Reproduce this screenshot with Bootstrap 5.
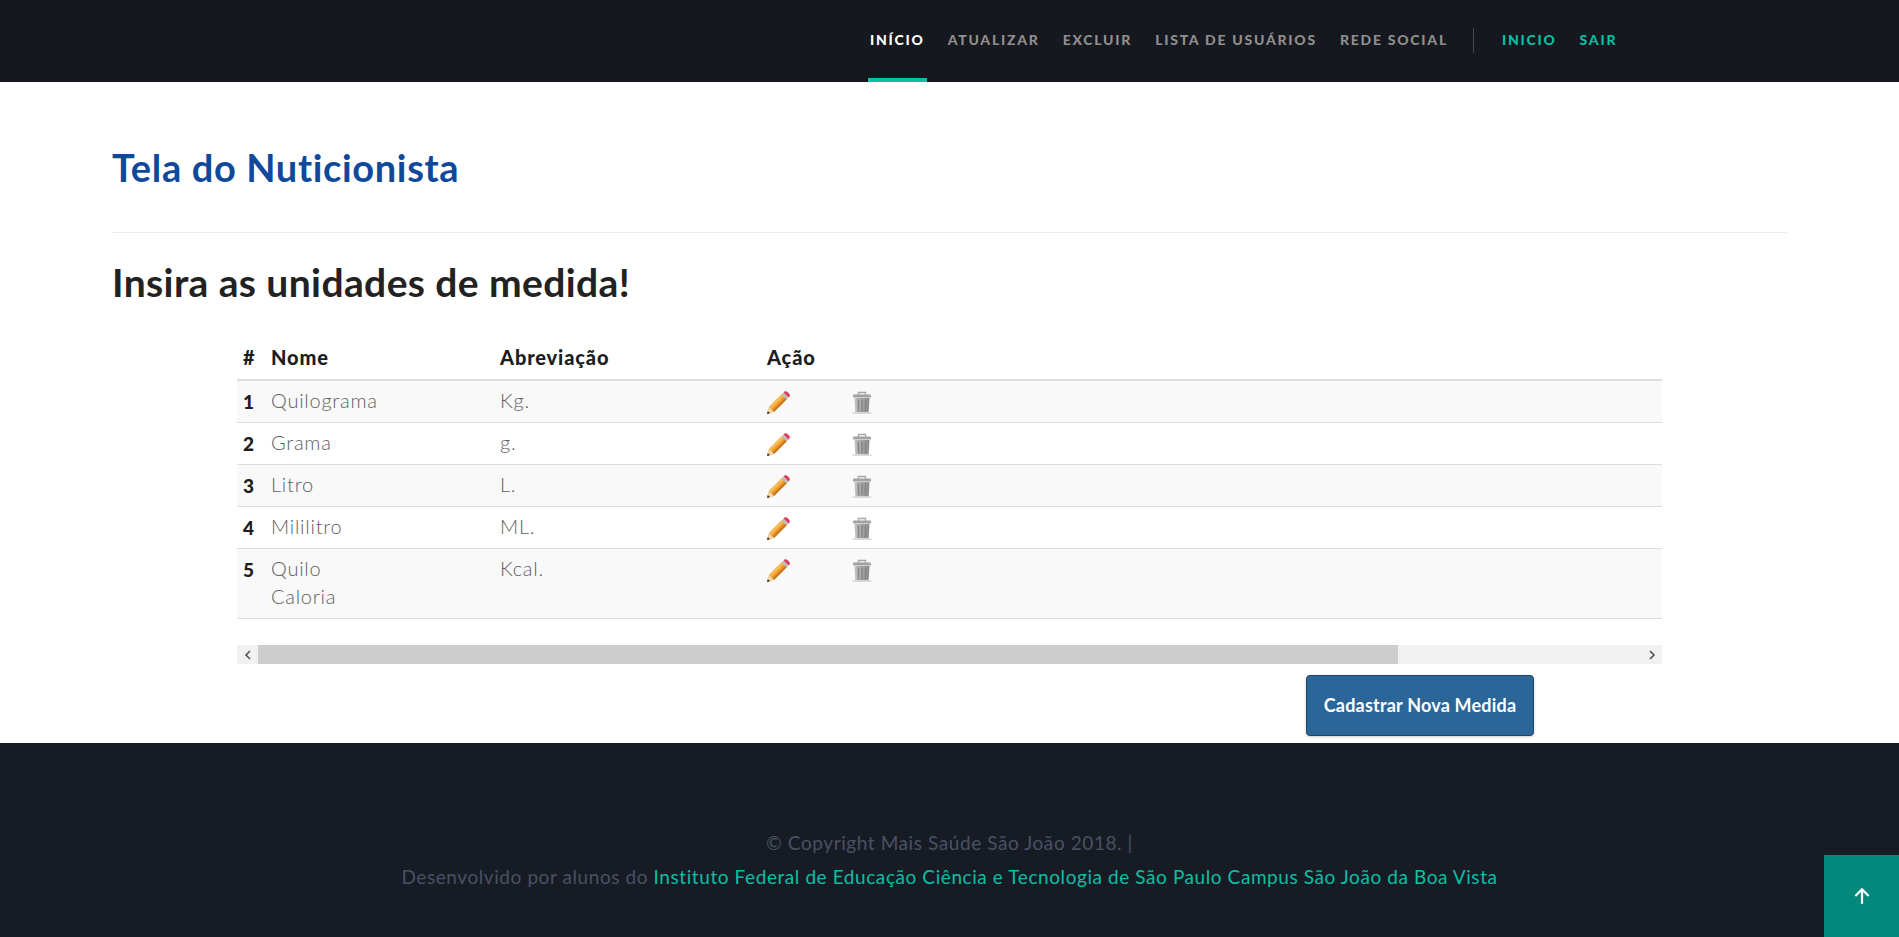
<!DOCTYPE html>
<html lang="pt-BR">
<head>
    <meta charset="UTF-8">
    <meta name="viewport" content="width=device-width, initial-scale=1.0">
    <title>Tela do Nuticionista</title>
    <link href="https://cdn.jsdelivr.net/npm/bootstrap@5.3.2/dist/css/bootstrap.min.css" rel="stylesheet">
    <style>
        body { font-family: "Lato", "Liberation Sans", sans-serif; background: #fff; min-height: 937px; position: relative; }
        .top-bar { background: #15181e; height: 82px; padding: 0 0 0 868px; align-items: stretch; flex-wrap: nowrap; justify-content: flex-start; }
        .top-links { flex-direction: row; align-items: stretch; }
        .top-links .nav-link { color: #8f8f8f; font-size: 14px; font-weight: 900; letter-spacing: 1.75px; text-transform: uppercase; padding: 0 2px; margin-right: 19px; height: 82px; line-height: 80px; border-bottom: 4px solid transparent; }
        .top-links .nav-link.active { color: #fff; border-bottom-color: #0bbfa5; }
        .top-links .nav-link.accent { color: #0bbfa5; }
        .top-sep { width: 1px; height: 25px; background: #44474c; margin: 28px 26px 0 4px; }
        .page-body { padding: 65px 112px 7px; }
        .page-title { color: #10499b; font-size: 38px; font-weight: 700; line-height: 40px; letter-spacing: .65px; margin: 0 0 45px; }
        .page-rule { margin: 0 0 29px; border: 0; border-top: 1px solid #eee; opacity: 1; }
        .page-sub { color: #222; font-size: 39px; font-weight: 700; line-height: 40px; letter-spacing: .4px; margin: 0 0 38px; }
        .units-wrap { margin: 0 125px; }
        .units { --bs-table-striped-bg: #f9f9f9; --bs-table-striped-color: #5e5e5e; --bs-table-border-color: #ddd; --bs-table-color: #5e5e5e; table-layout: fixed; margin-bottom: 26px; }
        .units th { color: #1d1d1d; font-size: 20px; font-weight: 900; line-height: 28px; letter-spacing: .85px; padding: 3px 6px 8px; border-bottom: 2px solid #ddd; }
        .units td { font-size: 20px; font-weight: 300; line-height: 28px; letter-spacing: .75px; padding: 5px 6px 8px; }
        .units tbody tr td.num { color: #1d1d1d; font-size: 19px; font-weight: 900; letter-spacing: 0; padding-top: 7px; padding-bottom: 6px; }
        .units svg { display: block; margin: 5px 0 -2px -1px; }
        .fake-scroll { height: 19px; background: #f1f1f1; align-items: stretch; }
        .fake-scroll .arrow { width: 21px; flex: none; display: flex; align-items: center; justify-content: center; }
        .fake-scroll .thumb { width: 1140px; background: #cdcdcd; flex: none; }
        .new-btn { margin: 11px 253px 0 0; width: 228px; height: 61px; background: #2c6699; border: 1px solid #1d446b; color: #fff; font-size: 18px; font-weight: 700; letter-spacing: .2px; border-radius: 4px; box-shadow: 0 1px 3px rgba(0,0,0,.2); padding: 0; }
        .new-btn:hover { background: #2c6699; color: #fff; border-color: #1d446b; }
        .page-foot { background: #171c24; height: 195px; padding-top: 83px; color: #4a5064; font-size: 19px; line-height: 34px; text-align: center; letter-spacing: .58px; }
        .page-foot p { margin: 0; }
        .page-foot a { color: #0bbfa5; text-decoration: none; }
        .to-top { position: absolute; right: 0; top: 855px; width: 75px; height: 82px; background: #03897b; display: flex; align-items: center; justify-content: center; }
    </style>
</head>
<body>
    <nav class="navbar top-bar">
        <ul class="navbar-nav top-links">
            <li class="nav-item"><a class="nav-link active" href="#">Início</a></li>
            <li class="nav-item"><a class="nav-link" href="#">Atualizar</a></li>
            <li class="nav-item"><a class="nav-link" href="#">Excluir</a></li>
            <li class="nav-item"><a class="nav-link" href="#">Lista de Usuários</a></li>
            <li class="nav-item"><a class="nav-link" href="#">Rede Social</a></li>
            <li class="top-sep"></li>
            <li class="nav-item"><a class="nav-link accent" href="#">Inicio</a></li>
            <li class="nav-item"><a class="nav-link accent" href="#">Sair</a></li>
        </ul>
    </nav>

    <main class="page-body">
        <h1 class="page-title">Tela do Nuticionista</h1>
        <hr class="page-rule">
        <h2 class="page-sub">Insira as unidades de medida!</h2>

        <div class="units-wrap">
            <table class="table table-striped units">
                <colgroup>
                    <col style="width: 28px">
                    <col style="width: 229px">
                    <col style="width: 267px">
                    <col style="width: 84px">
                    <col>
                </colgroup>
                <thead>
                    <tr><th>#</th><th>Nome</th><th>Abreviação</th><th>Ação</th><th></th></tr>
                </thead>
                <tbody id="rows"></tbody>
            </table>
            <div class="fake-scroll d-flex">
                <span class="arrow"><svg width="8" height="10" viewBox="0 0 8 10"><path d="M6 1 2 5l4 4" fill="none" stroke="#505050" stroke-width="1.6"/></svg></span>
                <span class="thumb"></span>
                <span class="flex-grow-1"></span>
                <span class="arrow"><svg width="8" height="10" viewBox="0 0 8 10"><path d="M2 1l4 4-4 4" fill="none" stroke="#505050" stroke-width="1.6"/></svg></span>
            </div>
        </div>
        <div class="d-flex justify-content-end">
            <a href="#" class="btn new-btn d-flex align-items-center justify-content-center">Cadastrar Nova Medida</a>
        </div>
    </main>

    <footer class="page-foot">
        <p>© Copyright Mais Saúde São João 2018. |</p>
        <p>Desenvolvido por alunos do <a href="#">Instituto Federal de Educação Ciência e Tecnologia de São Paulo Campus São João da Boa Vista</a></p>
    </footer>
    <a href="#" class="to-top" aria-label="Topo">
        <svg width="20" height="20" viewBox="0 0 18 18"><path d="M9 16V3M3 9l6-6 6 6" fill="none" stroke="#fff" stroke-width="2"/></svg>
    </a>

    <script>
        const pencil = `<svg width="24" height="24" viewBox="0 0 24 24">
            <path d="M1 23l2-7L16 3l5 5L8 21z" fill="#ee9b2d"/>
            <path d="M3 16L16 3l2 2L5 18z" fill="#f7bb55"/>
            <path d="M8 21L21 8l-1.500-1.500L6.500 19.500z" fill="#c9761a"/>
            <path d="M1 23l2-7 5 5z" fill="#f1d5a8"/>
            <path d="M1 23l.8-3 2.200 2.200z" fill="#3a2a1c"/>
            <path d="M15.500 3.500l2-2 5 5-2 2z" fill="#bdbdbd"/>
            <path d="M17.500 1.500l1-1c1-.6 2-.5 3 .5l1.500 1.500c1 1 1 2 .5 3l-1 1z" fill="#dc3c5c"/>
        </svg>`;
        const trash = `<svg width="24" height="24" viewBox="0 0 24 24">
            <defs><linearGradient id="bin" x1="0" x2="1" y1="0" y2="0"><stop offset="0" stop-color="#c4c4c4"/><stop offset=".5" stop-color="#a6a6a6"/><stop offset="1" stop-color="#8c8c8c"/></linearGradient></defs>
            <path d="M8.500 4V1.500h7V4" fill="none" stroke="#a8a8a8" stroke-width="1.300"/>
            <rect x="3" y="3.500" width="18" height="3" rx=".8" fill="#a2a2a2"/>
            <path d="M4.500 7h15l-.8 14.500H5.300z" fill="url(#bin)"/>
            <path d="M8.300 8.500l.3 12M12 8.500v12M15.700 8.500l-.3 12" stroke="#858585" stroke-width="1.500"/>
            <rect x="2.500" y="21.500" width="19" height="1.300" fill="#d2d2d2"/>
        </svg>`;
        const units = [
            ['Quilograma', 'Kg.'],
            ['Grama', 'g.'],
            ['Litro', 'L.'],
            ['Mililitro', 'ML.'],
            ['Quilo<br>Caloria', 'Kcal.']
        ];
        document.getElementById('rows').innerHTML = units.map((u, i) =>
            `<tr><td class="num">${i + 1}</td><td>${u[0]}</td><td>${u[1]}</td><td>${pencil}</td><td>${trash}</td></tr>`
        ).join('');
    </script>
    <script src="https://cdn.jsdelivr.net/npm/bootstrap@5.3.2/dist/js/bootstrap.bundle.min.js"></script>
</body>
</html>
